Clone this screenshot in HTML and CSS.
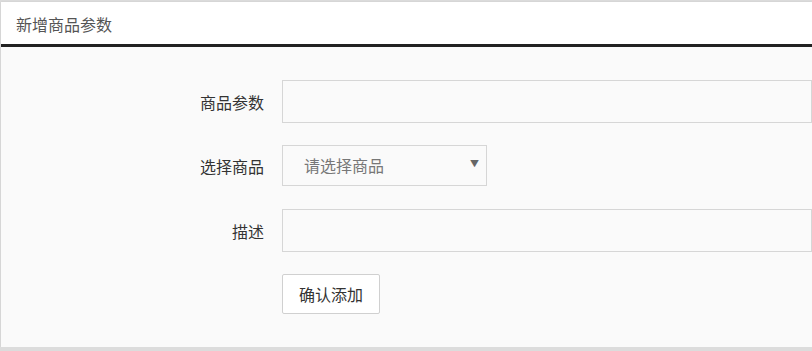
FILE: index.html
```html
<!DOCTYPE html>
<html lang="zh-CN">
<head>
<meta charset="utf-8">
<title>新增商品参数</title>
<link rel="stylesheet" href="styles.css">
</head>
<body>
<div class="panel">
  <div class="panel-header">新增商品参数</div>
  <div class="panel-body">
    <form class="form">
      <div class="row row-input">
        <label class="label">商品参数</label>
        <div class="control"><input class="input" type="text"></div>
      </div>
      <div class="row row-select">
        <label class="label">选择商品</label>
        <div class="control">
          <div class="select">
            <span class="select-text">请选择商品</span>
            <span class="select-arrow">▼</span>
          </div>
        </div>
      </div>
      <div class="row row-input">
        <label class="label">描述</label>
        <div class="control"><input class="input" type="text"></div>
      </div>
      <div class="row row-btn">
        <span class="label"></span>
        <div class="control"><button type="button" class="btn">确认添加</button></div>
      </div>
    </form>
  </div>
</div>
</body>
</html>
```
FILE: styles.css
```css
html, body {
  margin: 0;
  padding: 0;
}
body {
  background: #dcdcdc;
  font-family: "Noto Sans CJK SC", "Noto Sans", sans-serif;
  overflow: hidden;
}
.panel {
  margin: 2px 0 0 1px;
  background: #fafafa;
  height: 345px;
  box-shadow: 0 0 2px rgba(0,0,0,0.08);
}
.panel-header {
  background: #fff;
  padding-left: 15px;
  font-size: 16px;
  color: #555;
  border-bottom: 3px solid #222;
  box-sizing: border-box;
  height: 45px;
  line-height: 45px;
}
.panel-body {
  padding-top: 33px;
}
.form {
  display: flex;
  flex-direction: column;
}
.row {
  display: flex;
  align-items: center;
}
.label {
  width: 281px;
  flex: none;
  text-align: right;
  padding-right: 18px;
  box-sizing: border-box;
  font-size: 16px;
  color: #333;
}
.control {
  flex: 1;
  display: flex;
}
.input {
  width: 100%;
  height: 43px;
  box-sizing: border-box;
  border: 1px solid #d6d6d6;
  background: #fafafa;
  margin: 0;
  padding: 0 12px;
  font: inherit;
  outline: none;
  margin-right: -20px;
}
.row-input {
  height: 43px;
}
.row-select {
  height: 41px;
  margin-top: 22px;
}
.row-input + .row-btn {
  margin-top: 22px;
}
.row-select + .row-input {
  margin-top: 23px;
}
.select {
  width: 205px;
  height: 41px;
  box-sizing: border-box;
  border: 1px solid #d6d6d6;
  background: #fafafa;
  display: flex;
  align-items: center;
  justify-content: space-between;
  padding: 0 7px 2px 21px;
}
.select-text {
  font-size: 16px;
  color: #777;
}
.select-arrow {
  font-size: 9px;
  color: #666;
  margin-bottom: 2px;
}
.btn {
  width: 98px;
  height: 40px;
  border: 1px solid #d0d0d0;
  border-radius: 2px;
  background: #fff;
  font-family: inherit;
  font-size: 16px;
  color: #333;
  padding: 0;
  cursor: pointer;
}
```
